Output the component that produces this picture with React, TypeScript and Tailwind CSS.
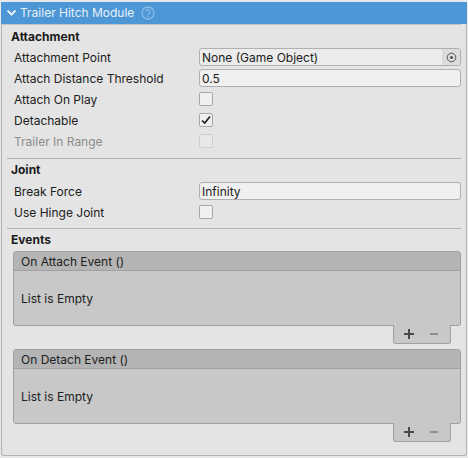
const Label = ({ children, dim }: { children: React.ReactNode; dim?: boolean }) => (
  <div className={`w-[185px] shrink-0 pt-[2px] ${dim ? "text-[#8c8c8c]" : ""}`}>{children}</div>
);

const Field = ({ children }: { children: React.ReactNode }) => (
  <div className="flex-1 h-[18px] rounded-[3px] border border-[#b0b0b0] bg-[#f0f0f0] pl-[2px] pt-[1px] flex items-center leading-none">{children}</div>
);

const Check = ({ checked, dim }: { checked?: boolean; dim?: boolean }) => (
  <div className={`w-[14px] h-[14px] rounded-[2px] border flex items-center justify-center ${dim ? "border-[#cfcfcf] bg-[#e8e8e8]" : "border-[#a8a8a8] bg-[#f0f0f0]"}`}>
    {checked && (
      <svg width="10" height="10" viewBox="0 0 10 10" fill="none">
        <path d="M1 5.5 L3.7 8 L9 1.5" stroke="#202020" strokeWidth="1.7" />
      </svg>
    )}
  </div>
);

const Row = ({ children, h = "h-[20px]" }: { children: React.ReactNode; h?: string }) => (
  <div className={`flex items-center pl-[12px] pr-[5px] ${h}`}>{children}</div>
);

const Heading = ({ children }: { children: React.ReactNode }) => (
  <div className="pl-[9px] h-[18px] flex items-center font-bold text-[#1a1a1a]">{children}</div>
);

const Separator = ({ mt }: { mt: string }) => <div className={`h-px bg-[#b4b4b4] ml-[5px] mr-[5px] ${mt}`} />;

const EventBox = ({ title }: { title: string }) => (
  <div className="ml-[11px] mr-[5px]">
    <div className="h-[75px] rounded-[3px] border border-[#a0a0a0] bg-[#c8c8c8] flex flex-col overflow-hidden">
      <div className="h-[19px] shrink-0 bg-[#b4b4b4] border-b border-[#a0a0a0] pl-[7px] pt-[1px] flex items-center">{title}</div>
      <div className="flex-1 pl-[7px] pt-[2px] flex items-center">List is Empty</div>
    </div>
    <div className="flex justify-end pr-[10px] mt-[-1px]">
      <div className="w-[58px] h-[19px] rounded-b-[3px] border border-t-0 border-[#a0a0a0] bg-[#c8c8c8]">
        <svg width="56" height="18" viewBox="0 0 56 18" className="block">
          <path d="M10 9h10M15 4v10" stroke="#4a4a4a" strokeWidth="2" />
          <path d="M36 9h8" stroke="#909090" strokeWidth="2" />
        </svg>
      </div>
    </div>
  </div>
);

export default function App() {
  return (
    <div className="w-[468px] h-[458px] bg-[#e8e8e8] text-[12px] text-[#202020] pt-[2px] overflow-hidden" style={{ fontFamily: "Inter, sans-serif" }}>
      <div className="h-[454px] ml-px mr-px rounded-b-[3px] border-x border-b border-[#b4b4b4] bg-[#e4e4e4]">
        <div className="h-[22px] -mx-px bg-[#4d97d6] flex items-center pl-[5px] text-[#e6f0f8] text-[12px]">
          <svg width="14" height="14" viewBox="0 0 14 14" fill="none">
            <path d="M1.5 4.5 L5.5 8.5 L9.5 4.5" stroke="#e6f0f8" strokeWidth="2" />
          </svg>
          <span>Trailer Hitch Module</span>
          <svg width="14" height="14" viewBox="0 0 14 14" fill="none" className="ml-[7px]">
            <circle cx="7" cy="7" r="6" stroke="#8cbce4" strokeWidth="1.3" />
            <path d="M5 5.6a2 2 0 1 1 3 1.7c-.7.4-1 .8-1 1.5" stroke="#8cbce4" strokeWidth="1.2" />
            <circle cx="7" cy="10.4" r=".8" fill="#8cbce4" />
          </svg>
        </div>
        <div className="h-px bg-[#c4c4c4] mr-[5px]" />
        <div className="pt-[3px]">
          <Heading>Attachment</Heading>
          <div className="h-px" />
          <Row>
            <Label>Attachment Point</Label>
            <div className="flex-1 h-[18px] rounded-[3px] border border-[#b0b0b0] bg-[#ececec] pl-[2px] flex items-center justify-between">
              <span className="pt-[1px]">None (Game Object)</span>
              <div className="w-[18px] h-full bg-[#dcdcdc] rounded-r-[3px] flex items-center justify-center">
                <svg width="11" height="11" viewBox="0 0 11 11" fill="none">
                  <circle cx="5.5" cy="5.5" r="4.3" stroke="#555" strokeWidth="1" />
                  <circle cx="5.5" cy="5.5" r="1.6" fill="#555" />
                </svg>
              </div>
            </div>
          </Row>
          <Row h="h-[22px]"><Label>Attach Distance Threshold</Label><Field>0.5</Field></Row>
          <Row><Label>Attach On Play</Label><Check /></Row>
          <Row h="h-[22px]"><Label>Detachable</Label><Check checked /></Row>
          <Row><Label dim>Trailer In Range</Label><Check dim /></Row>
          <Separator mt="mt-[7px]" />
        </div>
        <div className="pt-[2px]">
          <Heading>Joint</Heading>
          <div className="h-[2px]" />
          <Row><Label>Break Force</Label><Field>Infinity</Field></Row>
          <Row h="h-[22px]"><Label>Use Hinge Joint</Label><Check /></Row>
          <Separator mt="mt-[5px]" />
        </div>
        <div className="pt-[2px]">
          <Heading>Events</Heading>
          <div className="h-[2px]" />
          <EventBox title="On Attach Event ()" />
          <div className="h-[5px]" />
          <EventBox title="On Detach Event ()" />
        </div>
      </div>
    </div>
  );
}
